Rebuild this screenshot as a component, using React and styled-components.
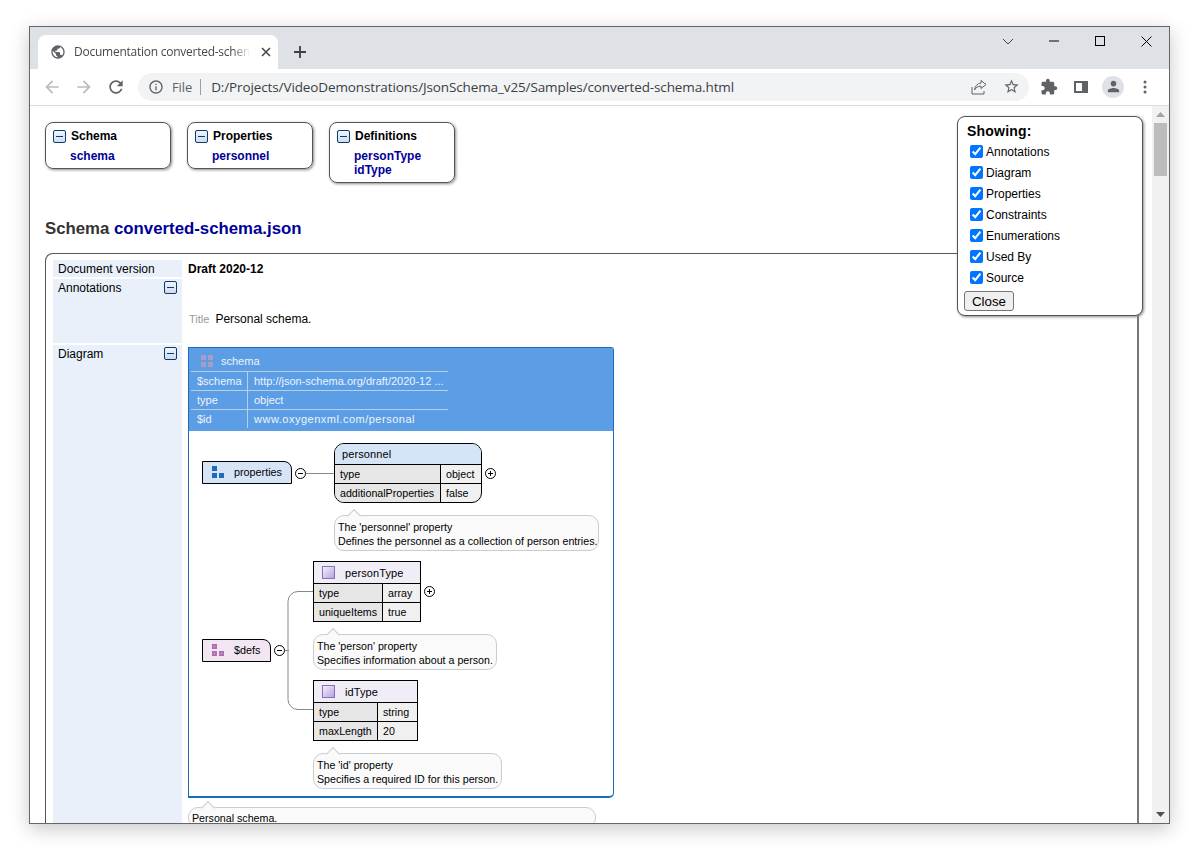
import React from 'react';
import styled, { createGlobalStyle } from 'styled-components';

const Global = createGlobalStyle`
  html, body { margin: 0; padding: 0; background: #fff; overflow: hidden; }
  body { font-family: "Liberation Sans", Arial, sans-serif; font-size: 12px; color: #000; }
`;

const Desktop = styled.div`
  width: 1200px;
  height: 850px;
  padding: 26px 0 0 29px;
  box-sizing: border-box;
`;

const Window = styled.div`
  width: 1141px;
  height: 798px;
  box-sizing: border-box;
  border: 1px solid #666;
  display: flex;
  flex-direction: column;
  background: #fff;
  box-shadow: 0 5px 18px rgba(0, 0, 0, 0.22);
  overflow: hidden;
`;

const TitleBar = styled.div`
  height: 42px;
  flex: none;
  background: #dee1e6;
  display: flex;
  align-items: flex-end;
  padding-left: 8px;
`;

const Tab = styled.div`
  width: 240px;
  height: 34px;
  box-sizing: border-box;
  background: #fff;
  border-radius: 8px 8px 0 0;
  display: flex;
  align-items: center;
  padding-left: 12px;
  gap: 8px;
`;

const TabTitle = styled.div`
  width: 176px;
  white-space: nowrap;
  padding-bottom: 1px;
  font-family: "Open Sans", "Noto Sans", sans-serif;
  font-size: 12px;
  letter-spacing: -0.25px;
  color: #45494d;
  mask-image: linear-gradient(to right, #000 90%, transparent);
`;

const TabClose = styled.svg`
  width: 10px;
  height: 10px;
  margin-left: 3px;
`;

const NewTab = styled.svg`
  width: 14px;
  height: 14px;
  margin: 0 0 10px 15px;
`;

const WindowControls = styled.div`
  margin-left: auto;
  height: 100%;
  display: flex;
  align-items: flex-start;
`;

const WindowButton = styled.div`
  width: 46px;
  height: 28px;
  display: flex;
  align-items: center;
  justify-content: center;
`;

const ToolBar = styled.div`
  height: 37px;
  flex: none;
  box-sizing: border-box;
  border-bottom: 1px solid #dadce0;
  display: flex;
  align-items: center;
  padding: 0 0 1px 6px;
`;

const ToolButton = styled.div`
  width: 32px;
  height: 28px;
  display: flex;
  align-items: center;
  justify-content: center;
`;

const AddressBar = styled.div`
  width: 891px;
  height: 28px;
  margin: 0 4px 0 6px;
  box-sizing: border-box;
  background: #f1f3f4;
  border-radius: 14px;
  display: flex;
  align-items: center;
  padding-left: 10px;
`;

const FileLabel = styled.span`
  font-family: "Open Sans", "Noto Sans", sans-serif;
  font-size: 13px;
  letter-spacing: -0.1px;
  color: #5f6368;
  margin-left: 8px;
  padding-right: 8px;
  border-right: 1px solid #9aa0a6;
  line-height: 16px;
`;

const UrlText = styled.span`
  font-family: "Open Sans", "Noto Sans", sans-serif;
  font-size: 13.5px;
  letter-spacing: -0.12px;
  color: #3c4043;
  margin-left: 10px;
  white-space: nowrap;
`;

const AddressActions = styled.div`
  margin-left: auto;
  display: flex;
  align-items: center;
  padding-right: 2px;
`;

const Avatar = styled.div`
  width: 22px;
  height: 22px;
  border-radius: 50%;
  background: #dee1e6;
  display: flex;
  align-items: center;
  justify-content: center;
`;

const Viewport = styled.div`
  flex: 1;
  min-height: 0;
  display: flex;
  position: relative;
`;

const Page = styled.div`
  flex: 1;
  min-width: 0;
  overflow: hidden;
  padding: 16px 13px 0 15px;
`;

const ScrollTrack = styled.div`
  width: 17px;
  flex: none;
  background: #f1f1f1;
  display: flex;
  flex-direction: column;
  align-items: center;
`;

const ScrollArrow = styled.div`
  height: 17px;
  flex: none;
  display: flex;
  align-items: center;
  justify-content: center;
`;

const ScrollThumb = styled.div`
  width: 13px;
  height: 53px;
  background: #bcbcbc;
`;

const ScrollFill = styled.div`
  flex: 1;
`;

const NavRow = styled.div`
  display: flex;
  align-items: flex-start;
  gap: 16px;
  margin-bottom: 37px;
`;

const NavCard = styled.div`
  width: 126px;
  box-sizing: border-box;
  border: 1px solid #555;
  border-radius: 8px;
  box-shadow: 1px 1px 3px #888;
  padding: 6px 7px 5px 7px;
  font-weight: bold;
  line-height: 14px;
`;

const NavTitle = styled.div`
  display: flex;
  align-items: center;
  gap: 5px;
  margin-bottom: 6px;
`;

const NavLink = styled.div`
  color: #000099;
  margin-left: 17px;
`;

const Toggle = styled.span`
  width: 13px;
  height: 13px;
  flex: none;
  box-sizing: border-box;
  border: 1px solid #0b3a6b;
  border-radius: 2px;
  background: linear-gradient(#f0f4fb, #cfdcf0);
  display: inline-flex;
  align-items: center;
  justify-content: center;
  &::before {
    content: "";
    width: 7px;
    height: 1px;
    background: #0b3a6b;
  }
`;

const Heading = styled.h1`
  margin: 0 0 15px;
  font-size: 16.8px;
  line-height: 18px;
  font-weight: bold;
  color: #333;
  & > span {
    color: #000099;
  }
`;

const SchemaPanel = styled.div`
  box-sizing: border-box;
  border: 1px solid #555;
  border-right: 2px solid #777;
  border-radius: 8px 8px 0 0;
  padding: 6px 0 0 7px;
  display: grid;
  grid-template-columns: 129px 1fr;
  column-gap: 6px;
  row-gap: 2px;
`;

const RowLabel = styled.div`
  background: #e9f0fa;
  padding: 2px 5px 0;
  line-height: 14px;
  height: ${p => p.$h};
  box-sizing: border-box;
  display: flex;
  align-items: flex-start;
  justify-content: space-between;
`;

const VersionValue = styled.div`
  height: 17px;
  box-sizing: border-box;
  font-weight: bold;
  line-height: 15px;
  padding-top: 2px;
`;

const TitleRow = styled.div`
  padding: 33px 0 0 1px;
  display: flex;
  align-items: baseline;
  gap: 6px;
`;

const TitleKey = styled.span`
  color: #999;
  font-size: 11px;
`;

const DiagramBox = styled.div`
  width: 426px;
  height: 451px;
  margin-top: 2px;
  box-sizing: border-box;
  border: 1px solid #1e6bb8;
  border-bottom-width: 2px;
  border-radius: 0 3px 5px 0;
  display: flex;
  flex-direction: column;
`;

const DiagramHead = styled.div`
  height: 83px;
  flex: none;
  background: #5c9ee6;
  color: #eef3fa;
  font-size: 11px;
  padding: 5px 0 0 2px;
  box-sizing: border-box;
`;

const DiagramName = styled.div`
  display: flex;
  align-items: center;
  gap: 8px;
  height: 16px;
  margin-bottom: 2px;
  padding-left: 10px;
`;

const HeadTable = styled.div`
  width: 257px;
  display: grid;
  grid-template-columns: 56px 1fr;
`;

const HeadCell = styled.div`
  height: 19px;
  line-height: 19px;
  box-sizing: border-box;
  border-top: 1px solid #b9cfe6;
  padding-left: 6px;
  border-left: ${p => (p.$val ? '1px solid #b9cfe6' : 'none')};
  letter-spacing: ${p => (p.$wide ? '0.5px' : '0')};
  white-space: nowrap;
  overflow: hidden;
`;

const Canvas = styled.div`
  position: relative;
  flex: 1;
`;

const Wires = styled.svg`
  position: absolute;
  inset: 0;
  width: 100%;
  height: 100%;
`;

const Node = styled.div`
  position: absolute;
  left: ${p => p.$x - 189}px;
  top: ${p => p.$y - 431}px;
  width: ${p => p.$w}px;
  box-sizing: border-box;
  border: 1px solid #000;
  border-radius: ${p => (p.$round ? '10px' : '0')};
  overflow: hidden;
  font-size: 10.67px;
  background: #f0f0f0;
`;

const NodeHead = styled.div`
  height: ${p => (p.$icon ? '21px' : '20px')};
  background: ${p => p.$bg};
  display: flex;
  align-items: center;
  font-size: 11px;
  letter-spacing: 0.1px;
  padding-left: ${p => (p.$icon ? '8px' : '7px')};
  gap: 10px;
`;

const NodeRows = styled.div`
  display: grid;
  grid-template-columns: ${p => p.$keyW}px 1fr;
`;

const NodeKey = styled.div`
  height: 19px;
  line-height: 18px;
  box-sizing: border-box;
  border-top: 1px solid #000;
  border-right: 1px solid #000;
  background: #e6e6e6;
  padding-left: 5px;
  white-space: nowrap;
`;

const NodeVal = styled.div`
  height: 19px;
  line-height: 18px;
  box-sizing: border-box;
  border-top: 1px solid #000;
  padding-left: 5px;
`;

const PurpleBox = styled.span`
  width: 13px;
  height: 13px;
  flex: none;
  box-sizing: border-box;
  border: 1px solid #8a6fc0;
  background: linear-gradient(135deg, #f3f0fa, #b5a4dc);
`;

const TabNode = styled.div`
  position: absolute;
  left: ${p => p.$x - 189}px;
  top: ${p => p.$y - 431}px;
  width: ${p => p.$w}px;
  height: 23px;
  box-sizing: border-box;
  border: 1px solid #000;
  border-top-right-radius: 8px;
  background: ${p => p.$bg};
  font-size: 10.8px;
  display: flex;
  align-items: center;
  padding: 0 0 1px 9px;
  gap: 10px;
`;

const Circle = styled.span`
  position: absolute;
  left: ${p => p.$x - 189 - 5.5}px;
  top: ${p => p.$y - 431 - 5.5}px;
  width: 11px;
  height: 11px;
  box-sizing: border-box;
  border: 1px solid #000;
  border-radius: 50%;
  background: #fff;
  display: flex;
  align-items: center;
  justify-content: center;
  &::before {
    content: "";
    position: absolute;
    width: 5px;
    height: 1px;
    background: #000;
  }
  &::after {
    content: "";
    display: ${p => (p.$plus ? 'block' : 'none')};
    position: absolute;
    width: 1px;
    height: 5px;
    background: #000;
  }
`;

const Note = styled.div`
  position: ${p => (p.$inline ? 'relative' : 'absolute')};
  left: ${p => (p.$inline ? '0' : `${p.$x - 189}px`)};
  top: ${p => (p.$inline ? '0' : `${p.$y - 431}px`)};
  width: ${p => p.$w}px;
  margin-top: ${p => (p.$inline ? '9px' : '0')};
  box-sizing: border-box;
  background: #fafafa;
  border: 1px solid #ccc;
  border-radius: 10px;
  font-size: 10.67px;
  line-height: 14px;
  padding: ${p => (p.$inline ? '3px' : '4px')} 0 2px 3px;
  white-space: nowrap;
  &::before {
    content: "";
    position: absolute;
    left: 14px;
    top: -5px;
    width: 9px;
    height: 9px;
    background: #fafafa;
    border-left: 1px solid #ccc;
    border-top: 1px solid #ccc;
    transform: rotate(45deg);
  }
`;

const Popup = styled.div`
  position: absolute;
  left: 927px;
  top: 10px;
  width: 186px;
  height: 200px;
  box-sizing: border-box;
  background: #fff;
  border: 1px solid #555;
  border-radius: 8px;
  box-shadow: 1px 1px 3px #888;
  padding: 6px;
`;

const PopupTitle = styled.div`
  font-size: 14px;
  font-weight: bold;
  letter-spacing: 0.2px;
  line-height: 16px;
  padding-left: 3px;
  margin-bottom: 2px;
`;

const PopupRow = styled.label`
  display: flex;
  align-items: center;
  height: 21px;
  gap: 3px;
  padding-left: 6px;
  & > input {
    width: 13px;
    height: 13px;
    margin: 0;
    accent-color: #0075ff;
  }
`;

const CloseButton = styled.button`
  display: block;
  width: 50px;
  height: 20px;
  margin-top: 3px;
  padding: 0;
  font-family: "Liberation Sans", Arial, sans-serif;
  font-size: 13.33px;
  background: #efefef;
  border: 1px solid #767676;
  border-radius: 3px;
`;

const Ico = ({ size = 24, vb = 24, color = '#5f6368', d }) => (
  <svg width={size} height={size} viewBox={`0 0 ${vb} ${vb}`} fill={color}>
    <path d={d} />
  </svg>
);

const icons = {
  back: 'M20 11H7.83l5.59-5.59L12 4l-8 8 8 8 1.41-1.41L7.83 13H20v-2z',
  forward: 'M12 4l-1.41 1.41L16.17 11H4v2h12.17l-5.58 5.59L12 20l8-8z',
  reload: 'M17.65 6.35C16.2 4.9 14.21 4 12 4c-4.42 0-7.99 3.58-7.99 8s3.57 8 7.99 8c3.73 0 6.84-2.55 7.73-6h-2.08c-.82 2.33-3.04 4-5.65 4-3.31 0-6-2.69-6-6s2.69-6 6-6c1.66 0 3.14.69 4.22 1.78L13 11h7V4l-2.35 2.35z',
  info: 'M11 7h2v2h-2zm0 4h2v6h-2zm1-9C6.48 2 2 6.48 2 12s4.48 10 10 10 10-4.48 10-10S17.52 2 12 2zm0 18c-4.41 0-8-3.59-8-8s3.59-8 8-8 8 3.59 8 8-3.59 8-8 8z',
  star: 'M22 9.24l-7.19-.62L12 2 9.19 8.63 2 9.24l5.46 4.73L5.82 21 12 17.27 18.18 21l-1.63-7.03L22 9.24zM12 15.4l-3.76 2.27 1-4.28-3.32-2.88 4.38-.38L12 6.1l1.71 4.04 4.38.38-3.32 2.88 1 4.28L12 15.4z',
  extension: 'M20.5 11H19V7c0-1.1-.9-2-2-2h-4V3.5C13 2.12 11.88 1 10.5 1S8 2.12 8 3.5V5H4c-1.1 0-1.99.9-1.99 2v3.8H3.5c1.49 0 2.7 1.21 2.7 2.7s-1.21 2.7-2.7 2.7H2V20c0 1.1.9 2 2 2h3.8v-1.5c0-1.49 1.21-2.7 2.7-2.7 1.49 0 2.7 1.21 2.7 2.7V22H17c1.1 0 2-.9 2-2v-4h1.5c1.38 0 2.5-1.12 2.5-2.5S21.88 11 20.5 11z',
  person: 'M12 12c2.21 0 4-1.79 4-4s-1.79-4-4-4-4 1.79-4 4 1.79 4 4 4zm0 2c-2.67 0-8 1.34-8 4v2h16v-2c0-2.66-5.33-4-8-4z',
  globe: 'M12 2C6.48 2 2 6.48 2 12s4.48 10 10 10 10-4.48 10-10S17.52 2 12 2zm-1 17.93c-3.95-.49-7-3.85-7-7.93 0-.62.08-1.21.21-1.79L9 15v1c0 1.1.9 2 2 2v1.93zm6.9-2.54c-.26-.81-1-1.39-1.9-1.39h-1v-3c0-.55-.45-1-1-1H8v-2h2c.55 0 1-.45 1-1V7h2c1.1 0 2-.9 2-2v-.41c2.93 1.19 5 4.06 5 7.41 0 2.08-.8 3.97-2.1 5.39z',
};

const ShareIcon = () => (
  <svg width="16" height="16" viewBox="0 0 16 16" fill="none" stroke="#5f6368" strokeWidth="1">
    <path d="M1 8v7h12v-3" />
    <path d="M10 1.5l5 4-5 4V7.2C7 7.2 4.8 8.4 3.5 11 3.8 7.6 6 4.4 10 4z" />
  </svg>
);

const SidePanelIcon = () => (
  <svg width="14" height="14" viewBox="0 0 14 14">
    <path fillRule="evenodd" fill="#5f6368" d="M0 1h14v12H0zM2 3v8h6V3z" />
  </svg>
);

const Kebab = () => (
  <svg width="4" height="14" viewBox="0 0 4 14" fill="#5f6368">
    <circle cx="2" cy="2" r="1.5" />
    <circle cx="2" cy="7" r="1.5" />
    <circle cx="2" cy="12" r="1.5" />
  </svg>
);

const SquaresIcon = ({ color }) => (
  <svg width="12" height="12" viewBox="0 0 12 12" fill={color}>
    <rect x="0" y="0" width="5" height="5" />
    <rect x="0" y="7" width="5" height="5" />
    <rect x="7" y="7" width="5" height="5" />
  </svg>
);

const DefsIcon = () => (
  <svg width="12" height="12" viewBox="0 0 12 12">
    <g fill="#b06fb0">
      <rect x="0" y="0" width="5" height="5" />
      <rect x="0" y="7" width="5" height="5" />
      <rect x="7" y="7" width="5" height="5" />
    </g>
    <g fill="#e2c4e2">
      <rect x="2" y="2" width="1" height="1" />
      <rect x="2" y="9" width="1" height="1" />
      <rect x="9" y="9" width="1" height="1" />
    </g>
  </svg>
);

const SchemaIcon = () => (
  <svg width="12" height="12" viewBox="0 0 12 12" fill="#a99cc6">
    <rect x="0" y="0" width="5" height="5" />
    <rect x="7" y="0" width="5" height="5" />
    <rect x="0" y="7" width="5" height="5" />
    <rect x="7" y="7" width="5" height="5" />
  </svg>
);

const Arrow = ({ up }) => (
  <svg width="9" height="5" viewBox="0 0 9 5" fill={up ? '#a3a3a3' : '#505050'}>
    <path d={up ? 'M4.5 0L9 5H0z' : 'M0 0h9L4.5 5z'} />
  </svg>
);

const showing = ['Annotations', 'Diagram', 'Properties', 'Constraints', 'Enumerations', 'Used By', 'Source'];

function DiagramNode({ x, y, w, keyW, round, head, icon, rows }) {
  return (
    <Node $x={x} $y={y} $w={w} $round={round}>
      <NodeHead $bg={round ? '#d6e4f7' : '#f1edf7'} $icon={icon}>
        {icon && <PurpleBox />}
        {head}
      </NodeHead>
      <NodeRows $keyW={keyW}>
        {rows.map(([k, v]) => (
          <React.Fragment key={k}>
            <NodeKey>{k}</NodeKey>
            <NodeVal>{v}</NodeVal>
          </React.Fragment>
        ))}
      </NodeRows>
    </Node>
  );
}

export default function App() {
  return (
    <Desktop>
      <Global />
      <Window>
        <TitleBar>
          <Tab>
            <Ico size={16} d={icons.globe} color="#5f6368" />
            <TabTitle>Documentation converted-schem</TabTitle>
            <TabClose viewBox="0 0 10 10" stroke="#45494d" strokeWidth="1.6">
              <path d="M1 1l8 8M9 1l-8 8" />
            </TabClose>
          </Tab>
          <NewTab viewBox="0 0 14 14" stroke="#3c4043" strokeWidth="1.8">
            <path d="M7 1v12M1 7h12" />
          </NewTab>
          <WindowControls>
            <WindowButton>
              <svg width="12" height="7" viewBox="0 0 12 7" fill="none" stroke="#3c4043"><path d="M1 1l5 5 5-5" /></svg>
            </WindowButton>
            <WindowButton>
              <svg width="10" height="2" viewBox="0 0 10 2" stroke="#000"><path d="M0 1h10" /></svg>
            </WindowButton>
            <WindowButton>
              <svg width="10" height="10" viewBox="0 0 10 10" fill="none" stroke="#000"><rect x="0.5" y="0.5" width="9" height="9" /></svg>
            </WindowButton>
            <WindowButton>
              <svg width="11" height="11" viewBox="0 0 11 11" fill="none" stroke="#000"><path d="M.5.5l10 10M10.5.5l-10 10" /></svg>
            </WindowButton>
          </WindowControls>
        </TitleBar>
        <ToolBar>
          <ToolButton><Ico size={20} d={icons.back} color="#babcbe" /></ToolButton>
          <ToolButton><Ico size={20} d={icons.forward} color="#babcbe" /></ToolButton>
          <ToolButton><Ico size={20} d={icons.reload} /></ToolButton>
          <AddressBar>
            <Ico size={16} d={icons.info} />
            <FileLabel>File</FileLabel>
            <UrlText>D:/Projects/VideoDemonstrations/JsonSchema_v25/Samples/converted-schema.html</UrlText>
            <AddressActions>
              <ToolButton><ShareIcon /></ToolButton>
              <ToolButton><Ico size={17} d={icons.star} /></ToolButton>
            </AddressActions>
          </AddressBar>
          <ToolButton><Ico size={18} d={icons.extension} /></ToolButton>
          <ToolButton><SidePanelIcon /></ToolButton>
          <ToolButton>
            <Avatar><Ico size={17} d={icons.person} /></Avatar>
          </ToolButton>
          <ToolButton><Kebab /></ToolButton>
        </ToolBar>
        <Viewport>
          <Page>
            <NavRow>
              <NavCard>
                <NavTitle><Toggle />Schema</NavTitle>
                <NavLink>schema</NavLink>
              </NavCard>
              <NavCard>
                <NavTitle><Toggle />Properties</NavTitle>
                <NavLink>personnel</NavLink>
              </NavCard>
              <NavCard>
                <NavTitle><Toggle />Definitions</NavTitle>
                <NavLink>personType</NavLink>
                <NavLink>idType</NavLink>
              </NavCard>
            </NavRow>
            <Heading>Schema <span>converted-schema.json</span></Heading>
            <SchemaPanel>
              <RowLabel $h="17px">Document version</RowLabel>
              <VersionValue>Draft 2020-12</VersionValue>
              <RowLabel $h="64px">Annotations<Toggle /></RowLabel>
              <TitleRow>
                <TitleKey>Title</TitleKey>
                Personal schema.
              </TitleRow>
              <RowLabel $h="600px">Diagram<Toggle /></RowLabel>
              <div>
                <DiagramBox>
                  <DiagramHead>
                    <DiagramName><SchemaIcon />schema</DiagramName>
                    <HeadTable>
                      <HeadCell>$schema</HeadCell>
                      <HeadCell $val>http://json-schema.org/draft/2020-12 ...</HeadCell>
                      <HeadCell>type</HeadCell>
                      <HeadCell $val>object</HeadCell>
                      <HeadCell>$id</HeadCell>
                      <HeadCell $val $wide>www.oxygenxml.com/personal</HeadCell>
                    </HeadTable>
                  </DiagramHead>
                  <Canvas>
                    <Wires fill="none" stroke="#888">
                      <path d="M117 42.5h28" />
                      <path d="M96 219.5h4" />
                      <path d="M124 160.5h-15a10 10 0 0 0 -10 10v98a10 10 0 0 0 10 10h15" />
                    </Wires>
                    <TabNode $x={202} $y={461} $w={90} $bg="#d6e4f7">
                      <SquaresIcon color="#1e6bb8" />properties
                    </TabNode>
                    <Circle $x={300.5} $y={473} />
                    <DiagramNode x={334} y={443} w={148} keyW={106} round head="personnel"
                      rows={[['type', 'object'], ['additionalProperties', 'false']]} />
                    <Circle $x={490.5} $y={473} $plus />
                    <Note $x={334} $y={515} $w={265}>The 'personnel' property<br />Defines the personnel as a collection of person entries.</Note>

                    <TabNode $x={202} $y={639} $w={69} $bg="#f2e6f2">
                      <DefsIcon />$defs
                    </TabNode>
                    <Circle $x={279.5} $y={650.5} />
                    <DiagramNode x={313} y={561} w={108} keyW={69} icon head="personType"
                      rows={[['type', 'array'], ['uniqueItems', 'true']]} />
                    <Circle $x={429.5} $y={591.5} $plus />
                    <Note $x={313} $y={634} $w={184}>The 'person' property<br />Specifies information about a person.</Note>
                    <DiagramNode x={313} y={680} w={105} keyW={64} icon head="idType"
                      rows={[['type', 'string'], ['maxLength', '20']]} />
                    <Note $x={313} $y={753} $w={189}>The 'id' property<br />Specifies a required ID for this person.</Note>
                  </Canvas>
                </DiagramBox>
                <Note $inline $w={408}>Personal schema.</Note>
              </div>
            </SchemaPanel>
          </Page>
          <ScrollTrack>
            <ScrollArrow><Arrow up /></ScrollArrow>
            <ScrollThumb />
            <ScrollFill />
            <ScrollArrow><Arrow /></ScrollArrow>
          </ScrollTrack>
          <Popup>
            <PopupTitle>Showing:</PopupTitle>
            {showing.map(s => (
              <PopupRow key={s}>
                <input type="checkbox" defaultChecked />
                {s}
              </PopupRow>
            ))}
            <CloseButton>Close</CloseButton>
          </Popup>
        </Viewport>
      </Window>
    </Desktop>
  );
}
